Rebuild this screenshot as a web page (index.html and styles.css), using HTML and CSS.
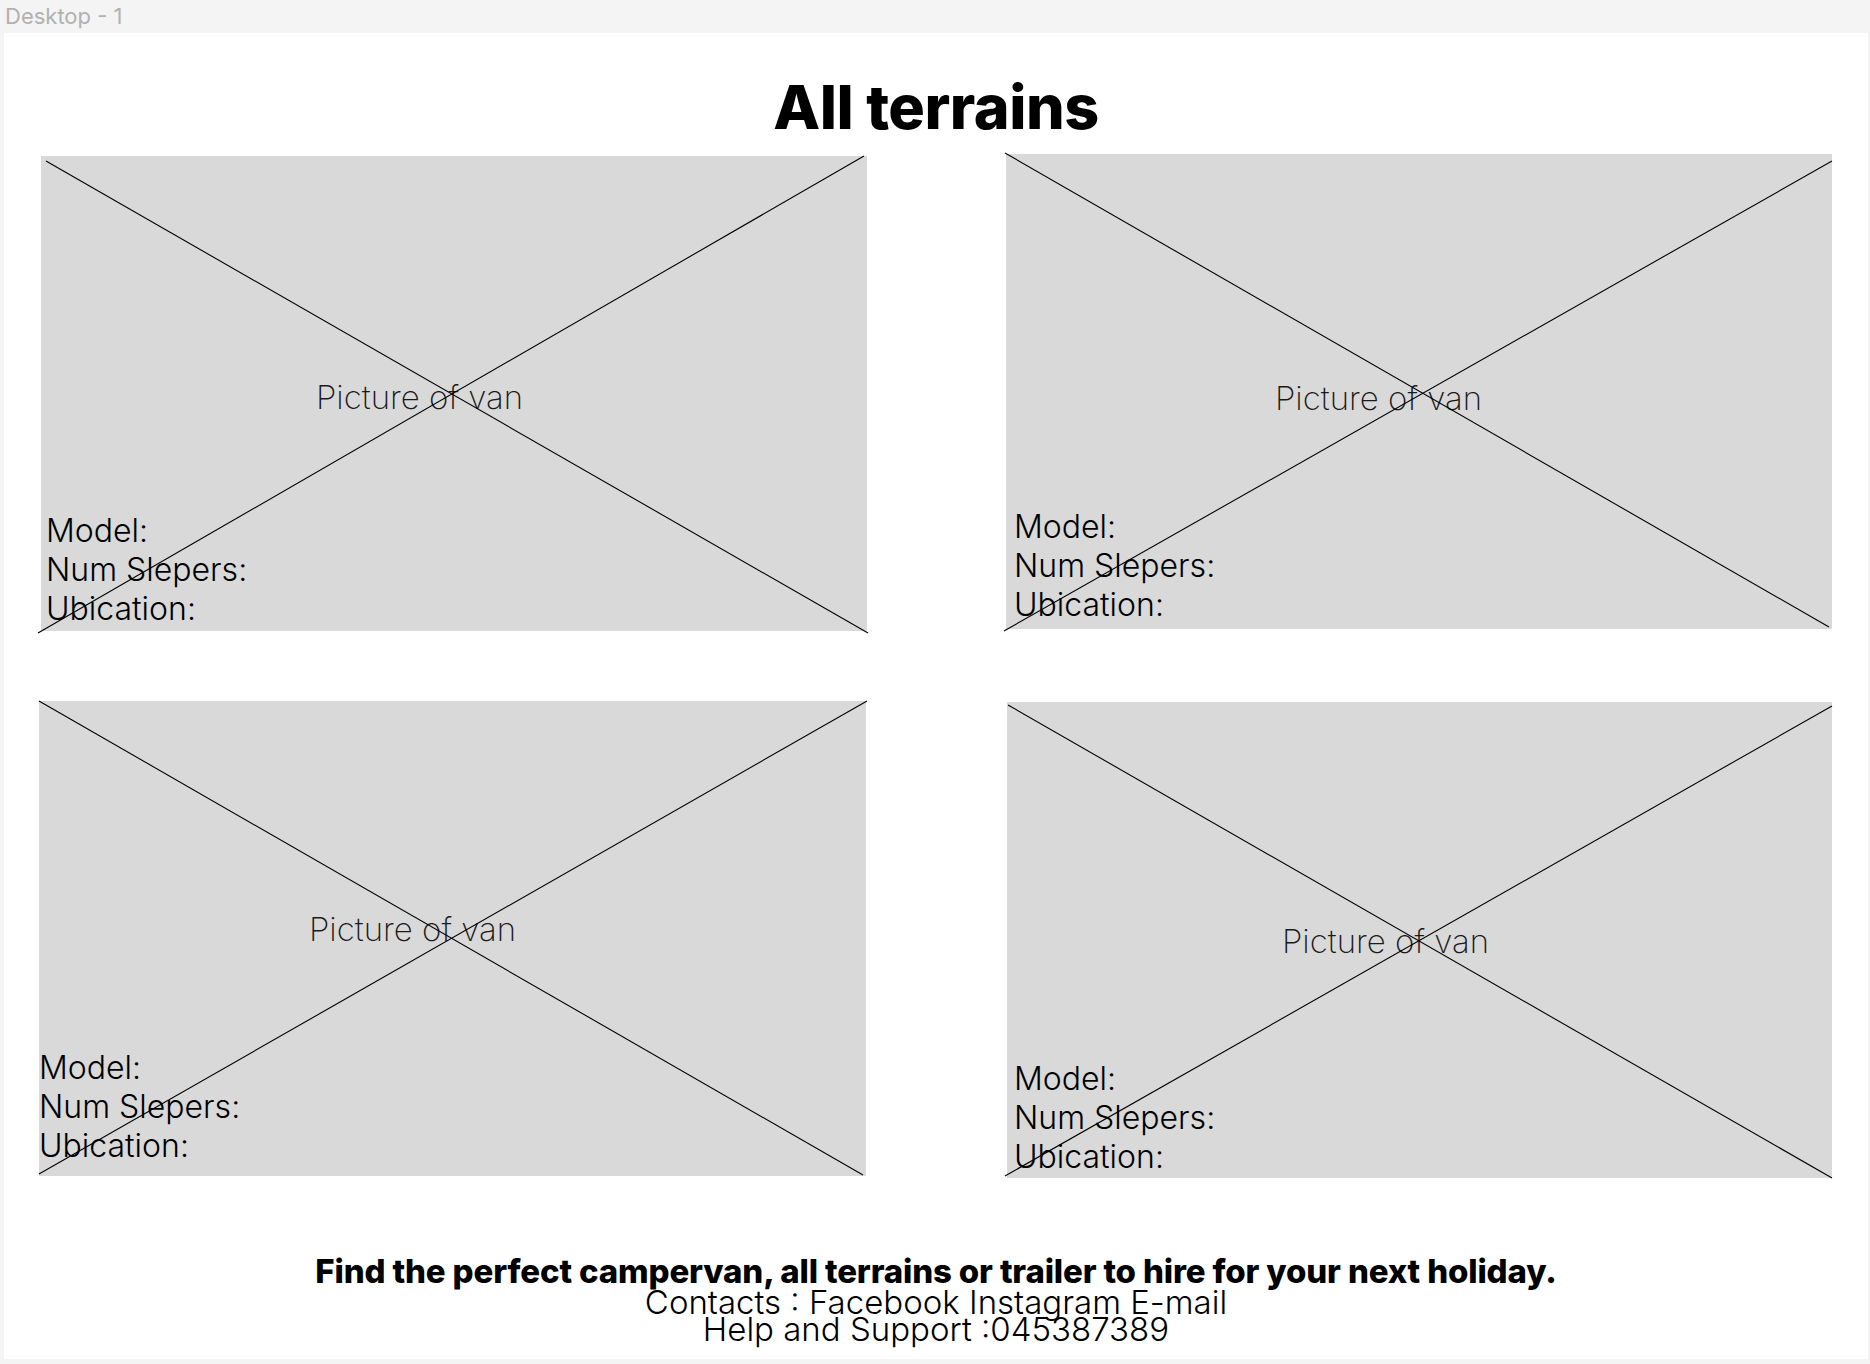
FILE: index.html
```html
<!DOCTYPE html>
<html lang="en">
<head>
<meta charset="utf-8">
<title>Desktop - 1</title>
<link rel="stylesheet" href="styles.css">
</head>
<body>
<div class="topbar">Desktop - 1</div>
<main class="frame">
  <h1 class="title">All terrains</h1>
  <section class="grid">
    <article class="card card--a">
      <svg class="cross" aria-hidden="true"><line x1="5" y1="5" x2="827" y2="477"/><line x1="-3" y1="477" x2="823" y2="0"/></svg>
      <p class="caption">Picture of van</p>
      <div class="info"><div>Model:</div><div>Num Slepers:</div><div>Ubication:</div></div>
    </article>
    <article class="card card--b">
      <svg class="cross" aria-hidden="true"><line x1="-1" y1="-1" x2="823" y2="473"/><line x1="-2" y1="477" x2="826" y2="7"/></svg>
      <p class="caption">Picture of van</p>
      <div class="info"><div>Model:</div><div>Num Slepers:</div><div>Ubication:</div></div>
    </article>
    <article class="card card--c">
      <svg class="cross" aria-hidden="true"><line x1="0" y1="0" x2="824" y2="474"/><line x1="0" y1="473" x2="828" y2="0"/></svg>
      <p class="caption">Picture of van</p>
      <div class="info"><div>Model:</div><div>Num Slepers:</div><div>Ubication:</div></div>
    </article>
    <article class="card card--d">
      <svg class="cross" aria-hidden="true"><line x1="1" y1="3" x2="825" y2="476"/><line x1="-2" y1="474" x2="825" y2="4"/></svg>
      <p class="caption">Picture of van</p>
      <div class="info"><div>Model:</div><div>Num Slepers:</div><div>Ubication:</div></div>
    </article>
  </section>
  <footer class="footer">
    <div class="footer-lead">Find the perfect campervan, all terrains or trailer to hire for your next holiday.</div>
    <div class="footer-line">Contacts : Facebook Instagram E-mail</div>
    <div class="footer-line">Help and Support :045387389</div>
  </footer>
</main>
</body>
</html>
```

FILE: styles.css
```css
* { box-sizing: border-box; }

html, body {
  margin: 0;
  padding: 0;
}

body {
  width: 1870px;
  min-height: 1364px;
  background: #f4f4f4;
  font-family: Inter, "Noto Sans", "Liberation Sans", sans-serif;
  color: #000;
  overflow: hidden;
}

.topbar {
  height: 33px;
  line-height: 33px;
  padding-left: 5px;
  font-size: 22px;
  font-weight: 400;
  color: #b1b1b1;
}

.frame {
  width: 1864px;
  height: 1326px;
  margin-left: 4px;
  background: #fff;
  padding-top: 44px;
  display: flex;
  flex-direction: column;
  align-items: stretch;
}

.title {
  margin: 0;
  font-size: 61px;
  line-height: 61px;
  font-weight: 800;
  text-align: center;
  letter-spacing: -0.5px;
}

.grid {
  margin-top: 16px;
  padding-left: 35px;
  display: grid;
  grid-template-columns: 828px 826px;
  grid-template-rows: 477px 477px;
  column-gap: 139px;
  row-gap: 70px;
  align-items: start;
}

.card {
  position: relative;
  background: #d9d9d9;
  display: flex;
  flex-direction: column;
  align-items: flex-start;
}

.card--a { width: 826px; height: 475px; margin-left: 2px; margin-top: 2px;
  --cap-x: 275px; --cap-y: 221px; --info-x: 5px; --info-b: 3px; }
.card--b { width: 826px; height: 475px;
  --cap-x: 269px; --cap-y: 224px; --info-x: 8px; --info-b: 5px; }
.card--c { width: 827px; height: 475px;
  --cap-x: 270px; --cap-y: 208px; --info-x: 0px; --info-b: 11px; }
.card--d { width: 825px; height: 476px; margin-left: 1px; margin-top: 1px;
  --cap-x: 275px; --cap-y: 219px; --info-x: 7px; --info-b: 2px; }

.cross {
  position: absolute;
  left: 0;
  top: 0;
  width: 100%;
  height: 100%;
  overflow: visible;
  pointer-events: none;
}

.cross line {
  stroke: #000;
  stroke-width: 1.1;
}

.caption {
  margin: var(--cap-y) 0 0 var(--cap-x);
  font-size: 33px;
  line-height: 40px;
  font-weight: 200;
  color: #1a1a1a;
}

.info {
  margin-top: auto;
  margin-left: var(--info-x);
  margin-bottom: var(--info-b);
  font-size: 32px;
  line-height: 39px;
  font-weight: 300;
}

.footer {
  margin-top: 76px;
  text-align: center;
}

.footer-lead {
  font-size: 33px;
  line-height: 35px;
  font-weight: 800;
  letter-spacing: -0.15px;
}

.footer-line {
  font-size: 33px;
  line-height: 27px;
  font-weight: 300;
}
```
